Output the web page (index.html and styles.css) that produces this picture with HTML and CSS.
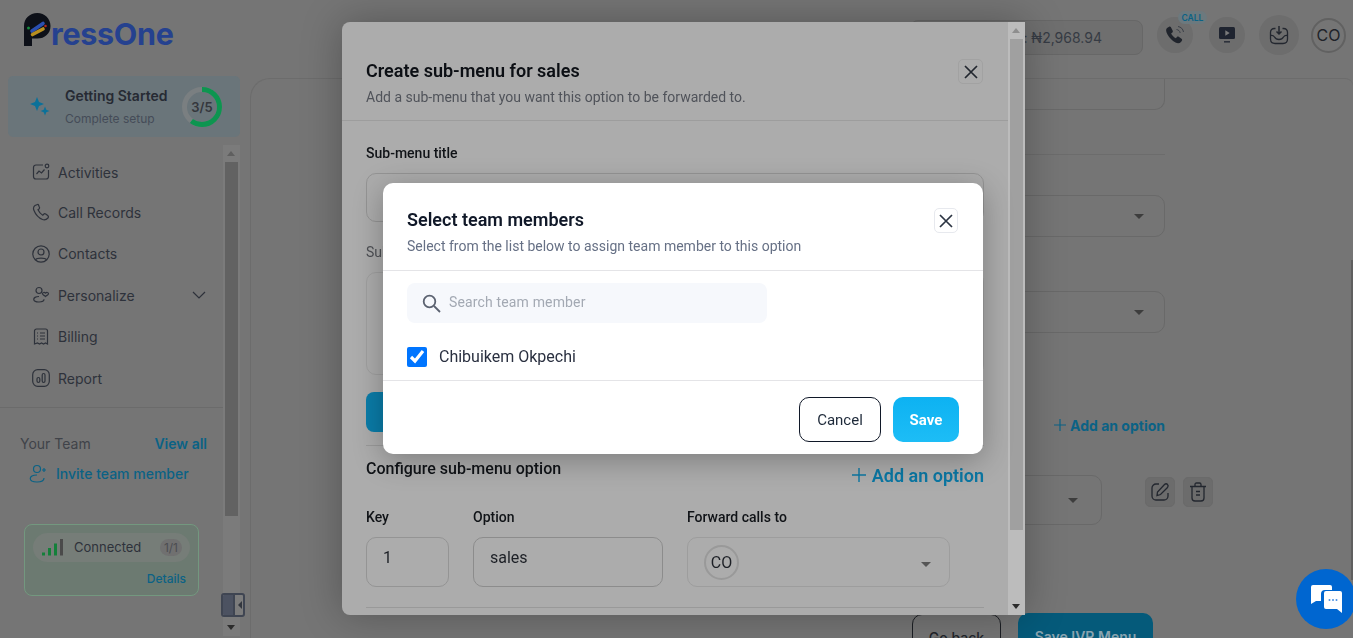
FILE: index.html
```html
<!DOCTYPE html>
<html lang="en">
<head>
<meta charset="utf-8">
<title>PressOne</title>
<link rel="stylesheet" href="styles.css">
</head>
<body>
<div class="app">
  <aside class="sidebar">
    <div class="logo">
      <svg class="logo-mark" width="27" height="33" viewBox="0 0 27 33">
        <path d="M0 33V13C0 5.500 5.700 0 13.300 0 20.800 0 26.500 5.800 26.500 13 26.500 20.500 20.800 25.600 13.300 25.600H8V33Z" fill="#0d1018"/>
        <path d="M8 18 19 10.500" stroke="#2a4fb0" stroke-width="3.600" stroke-linecap="round"/>
        <path d="M8.500 21.500 19 16" stroke="#b98f1f" stroke-width="3.600" stroke-linecap="round"/>
        <circle cx="4.500" cy="15" r="1.500" fill="#168a3c"/>
        <circle cx="21.500" cy="13" r="1.300" fill="#b3261e"/>
      </svg>
      <span class="logo-text">ressOne</span>
    </div>
    <div class="getting">
      <svg class="sparkle" width="20" height="20" viewBox="0 0 20 20" fill="#0b7199">
        <path d="M7 1 9 6 14 8 9 10 7 15 5 10 0 8 5 6Z"/>
        <path d="M15 10.500 16.300 13.700 19.500 15 16.300 16.300 15 19.500 13.700 16.300 10.500 15 13.700 13.700Z"/>
      </svg>
      <div class="getting-text">
        <div class="getting-title">Getting Started</div>
        <div class="getting-sub">Complete setup</div>
      </div>
      <div class="ring">
        <svg width="40" height="40" viewBox="0 0 40 40">
          <circle cx="20" cy="20" r="17.500" fill="none" stroke="#7a7f81" stroke-width="5"/>
          <circle cx="20" cy="20" r="17.500" fill="none" stroke="#0d9550" stroke-width="5" stroke-dasharray="66 110" transform="rotate(-90 20 20)"/>
        </svg>
        <span class="ring-label">3/5</span>
      </div>
    </div>
    <div class="side-scroll">
      <div class="side-content">
        <nav class="nav">
          <a class="nav-item"><svg class="nav-icon" viewBox="0 0 18 18" fill="none" stroke="currentColor" stroke-width="1.200"><path d="M11 2H4a2.500 2.500 0 0 0-2.500 2.500v9A2.500 2.500 0 0 0 4 16h10a2.500 2.500 0 0 0 2.500-2.500V7"/><circle cx="15" cy="3" r="1.800"/><path d="M4.500 11 7 8l2.500 2 3-3.500"/></svg>Activities</a>
          <a class="nav-item"><svg class="nav-icon" viewBox="0 0 18 18" fill="none" stroke="currentColor" stroke-width="1.200"><path d="M5.500 1.500 3 2.500C1.500 3.500 1 5 2 7.500c2 5 5 7.500 8.500 9 2 .7 4 0 5.500-1.500.7-.9.5-1.800-.3-2.500l-2-1.500c-.8-.5-1.500-.4-2.100.3l-.8.9C8.500 11 7 9 6 6.800l1-.8c.6-.6.700-1.300.3-2L6.500 2c-.2-.5-.6-.6-1-.5Z"/></svg>Call Records</a>
          <a class="nav-item"><svg class="nav-icon" viewBox="0 0 18 18" fill="none" stroke="currentColor" stroke-width="1.200"><circle cx="9" cy="9" r="8.200"/><circle cx="9" cy="7" r="3"/><path d="M3.500 14.800C5 12.500 13 12.500 14.500 14.800"/></svg>Contacts</a>
          <a class="nav-item"><svg class="nav-icon" viewBox="0 0 18 18" fill="none" stroke="currentColor" stroke-width="1.200"><circle cx="7" cy="4.500" r="3"/><path d="M7 10.500c-7 0-7 5.500 0 5.500 3 0 5-1 5-2.700"/><path d="M13.500 10.500c-1-1.300-3.200-1.300-3-3 .2-1.200 2-1.400 3-.4 1-1 2.800-.8 3 .4.200 1.700-2 1.700-3 3Z"/></svg>Personalize<svg class="chev" width="14" height="8" viewBox="0 0 14 8" fill="none" stroke="currentColor" stroke-width="1.200"><path d="M1 1l6 6 6-6"/></svg></a>
          <a class="nav-item"><svg class="nav-icon" viewBox="0 0 18 18" fill="none" stroke="currentColor" stroke-width="1.200"><path d="M2.500 16V3a2 2 0 0 1 2-2h9a2 2 0 0 1 2 2v13l-2-1-2 1-2-1-2 1-2-1Z"/><path d="M5 5h1M8 5h5M5 8h1M8 8h5M5 11h1M8 11h5"/></svg>Billing</a>
          <a class="nav-item"><svg class="nav-icon" viewBox="0 0 18 18" fill="none" stroke="currentColor" stroke-width="1.200"><rect x=".7" y=".7" width="16.600" height="16.600" rx="5"/><rect x="5" y="8.500" width="2.800" height="5" rx="1.400"/><rect x="10.200" y="4.500" width="2.800" height="9" rx="1.400"/></svg>Report</a>
        </nav>
        <div class="team">
          <div class="team-head"><span class="team-title">Your Team</span><a class="view-all">View all</a></div>
          <a class="invite"><svg width="18" height="19" viewBox="0 0 18 19" fill="none" stroke="currentColor" stroke-width="1.200"><circle cx="8" cy="5" r="3.500"/><path d="M8 11c-9 0-9 7 0 7 5 0 7-2 7-4"/><path d="M13 6h4M15 4v4"/></svg>Invite team member</a>
        </div>
        <div class="conn">
          <div class="conn-pill">
            <svg width="21" height="17" viewBox="0 0 21 17"><rect x="0" y="13.500" width="3" height="3" fill="#14803a"/><rect x="6" y="9" width="3" height="7.500" fill="#14803a"/><rect x="12" y="4.500" width="3" height="12" fill="#14803a"/><rect x="18" y="0" width="3" height="16.500" fill="#4a4a4a"/></svg>
            <span class="conn-label">Connected</span>
            <span class="conn-count">1/1</span>
          </div>
          <a class="conn-details">Details</a>
        </div>
      </div>
      <div class="sbar sbar-side">
        <span class="arrow-up dim"></span>
        <div class="thumb thumb-side"></div>
        <span class="arrow-down"></span>
      </div>
      <button class="collapse" type="button"><span class="collapse-fill"></span><span class="collapse-arrow"></span></button>
    </div>
  </aside>

  <div class="right">
    <header class="topbar">
      <div class="balance">Balance: ₦2,968.94</div>
      <div class="round phone">
        <svg width="20" height="20" viewBox="0 0 20 20"><path d="M4.500 1.500 2 3C.5 4.500 1 6.500 2.500 9.500c2 3.500 4.500 6 8 8 2 1 4 1 5.500-.5l1-1.500c.3-.7 0-1.300-.5-1.700l-2.800-2c-.6-.4-1.300-.3-1.800.2l-1 1.200c-2-1-3.700-2.700-4.800-4.800l1.300-1c.5-.5.6-1.200.2-1.800L5.800 2c-.4-.5-.8-.7-1.300-.5Z" fill="#20242c"/><path d="M11.500 4.500c2 .3 3.300 1.500 3.700 3.500M13 1.500c3 .5 5 2.500 5.500 5.500" fill="none" stroke="#3a3f48" stroke-width="1"/></svg>
        <span class="badge">CALL</span>
      </div>
      <div class="round video">
        <svg width="18" height="18" viewBox="0 0 18 18"><rect x="1" y="1" width="16" height="12" rx="1.500" fill="#1f2430"/><path d="M7.300 4.200 11.700 7 7.300 9.800Z" fill="#7a7a7a"/><rect x="6" y="15.200" width="6" height="1.300" fill="#1f2430"/></svg>
      </div>
      <div class="round inbox">
        <svg width="20" height="20" viewBox="0 0 20 20" fill="none" stroke="#23272f" stroke-width="1.300"><path d="M6.500 3.500H5.500C3 3.500 1.500 5 1.500 7.500v6.500c0 2.800 1.700 4.500 4.500 4.500h8c2.800 0 4.500-1.700 4.500-4.500V7.500c0-2.500-1.500-4-4-4h-1"/><path d="M1.500 10.500c2-.5 3 0 4 1.500 1 1.800 2.500 2.500 4.500 2.500s3.500-.7 4.500-2.500c1-1.500 2-2 4-1.500"/><path d="M10 1v7.500M7.500 6.500 10 9l2.500-2.500" stroke-width="1.500"/></svg>
      </div>
      <div class="avatar avatar-top">CO</div>
    </header>
    <main class="panel">
      <div class="form">
        <div class="field input-tail"></div>
        <div class="field rule"></div>
        <div class="field select first-select"><span class="caret"></span></div>
        <div class="field select second-select"><span class="caret"></span></div>
        <a class="field add-base"><svg width="12" height="12" viewBox="0 0 12 12" stroke="currentColor" stroke-width="1.200"><path d="M6 0v12M0 6h12"/></svg>Add an option</a>
        <div class="opt-row">
          <div class="select opt-select"><span class="caret"></span></div>
          <div class="tool">
            <svg width="20" height="20" viewBox="0 0 20 20" fill="none" stroke="#23272f" stroke-width="1.300"><path d="M9 2H6a4 4 0 0 0-4 4v8a4 4 0 0 0 4 4h8a4 4 0 0 0 4-4v-3"/><path d="M7 13.500 7.500 10l7-7.500c1-1 2.200-1 3 0 .8.800.8 2 0 3l-7 7Z"/></svg>
          </div>
          <div class="tool">
            <svg width="18" height="20" viewBox="0 0 18 20" fill="none" stroke="#23272f" stroke-width="1.300"><path d="M1 4.500h16M6 4V2.500c0-1 .5-1.500 1.500-1.500h3c1 0 1.500.5 1.500 1.500V4"/><path d="M3 5v11a3 3 0 0 0 3 3h6a3 3 0 0 0 3-3V5M7 9.500h4M7 13h4"/></svg>
          </div>
        </div>
        <div class="actions">
          <button class="btn-back" type="button">Go back</button>
          <button class="btn-save-ivr" type="button">Save IVR Menu</button>
        </div>
      </div>
      <span class="page-thumb"></span>
    </main>
  </div>
</div>

<div class="layer layer-sub">
  <section class="sub-modal">
    <div class="sub-scroll">
      <div class="sub-head">
        <div>
          <h2 class="sub-title">Create sub-menu for sales</h2>
          <p class="sub-desc">Add a sub-menu that you want this option to be forwarded to.</p>
        </div>
        <button class="close close-dim" type="button"><svg width="14" height="14" viewBox="0 0 14 14" stroke="currentColor" stroke-width="1.700"><path d="M1 1l12 12M13 1 1 13"/></svg></button>
      </div>
      <div class="sub-body">
        <label class="lab">Sub-menu title</label>
        <div class="box box-title"></div>
        <label class="lab lab-muted">Sub</label>
        <div class="box box-msg"></div>
        <div class="blue-btn"></div>
        <div class="hr hr-a"></div>
        <div class="config-head">
          <span class="config-title">Configure sub-menu option</span>
          <a class="add-sub"><svg width="14" height="14" viewBox="0 0 14 14" stroke="currentColor" stroke-width="1.400"><path d="M7 0v14M0 7h14"/></svg>Add an option</a>
        </div>
        <div class="cfg-grid">
          <span class="lab-s">Key</span><span class="lab-s">Option</span><span class="lab-s">Forward calls to</span>
          <div class="box cell">1</div>
          <div class="box cell cell-strong">sales</div>
          <div class="box cell-forward"><span class="avatar avatar-mini">CO</span><span class="caret caret-sub"></span></div>
        </div>
        <div class="hr hr-b"></div>
      </div>
    </div>
    <div class="sbar sbar-sub">
      <span class="arrow-up dim-sub"></span>
      <div class="thumb thumb-sub"></div>
      <span class="arrow-down"></span>
    </div>
  </section>
</div>

<div class="layer layer-team">
  <section class="team-modal">
    <div class="team-modal-head">
      <div>
        <h2 class="tm-title">Select team members</h2>
        <p class="tm-desc">Select from the list below to assign team member to this option</p>
      </div>
      <button class="close close-light" type="button"><svg width="14" height="14" viewBox="0 0 14 14" stroke="currentColor" stroke-width="1.700"><path d="M1 1l12 12M13 1 1 13"/></svg></button>
    </div>
    <div class="tm-body">
      <div class="search">
        <svg width="19" height="19" viewBox="0 0 19 19" fill="none" stroke="#5b6270" stroke-width="1.800"><circle cx="7.500" cy="7.500" r="5.800"/><path d="m12 12 6 6"/></svg>
        <span class="search-ph">Search team member</span>
      </div>
      <label class="member"><input class="check" type="checkbox" checked><span>Chibuikem Okpechi</span></label>
    </div>
    <div class="tm-foot">
      <button class="btn-cancel" type="button">Cancel</button>
      <button class="btn-save" type="button">Save</button>
    </div>
  </section>
</div>

<button class="chat" type="button" aria-label="Chat">
  <svg width="32" height="28" viewBox="0 0 32 28" fill="#fff"><path d="M2 0h17a2 2 0 0 1 2 2v3h-7a4 4 0 0 0-4 4v7H5l-5 3V2a2 2 0 0 1 2-2Z"/><path d="M13 8a2 2 0 0 1 2-2h14a2 2 0 0 1 2 2v20l-5-4H15a2 2 0 0 1-2-2Z"/><g fill="#4a90e2"><circle cx="18.500" cy="15" r="1"/><circle cx="22" cy="15" r="1"/><circle cx="25.500" cy="15" r="1"/></g></svg>
</button>
</body>
</html>
```

FILE: styles.css
```css
* { box-sizing: border-box; }
html, body { margin: 0; height: 638px; overflow: hidden; }
body { font-family: Inter, "Noto Sans", sans-serif; background: #757575; color: #2c3039; font-size: 14px; }
a { display: block; }
button { font-family: inherit; }
h2, p { margin: 0; }

.app { display: grid; grid-template-columns: 250px 1fr; height: 638px; }

/* Sidebar */
.sidebar { display: flex; flex-direction: column; min-width: 0; height: 638px; }
.logo { height: 76px; padding: 13px 0 0 24px; display: flex; align-items: flex-start; }
.logo-mark { flex: none; }
.logo-text { font-size: 30.500px; font-weight: 700; line-height: 38px; color: #25418f; margin-top: 2px; letter-spacing: -.3px; }
.getting { width: 232px; height: 61px; margin-left: 8px; background: #6a757a; border-radius: 5px; display: flex; align-items: center; padding: 0 18px 0 22px; }
.sparkle { flex: none; margin-top: -2px; }
.getting-text { margin-left: 15px; flex: 1; }
.getting-title { font-size: 14px; font-weight: 600; line-height: 18px; color: #262a33; }
.getting-sub { font-size: 12px; line-height: 16px; color: #454c58; margin-top: 6px; }
.ring { width: 40px; height: 40px; position: relative; display: flex; align-items: center; justify-content: center; flex: none; }
.ring svg { position: absolute; inset: 0; }
.ring-label { font-size: 13px; font-weight: 600; color: #34373d; position: relative; }

.side-scroll { position: relative; display: flex; width: 240px; height: 491px; margin-top: 8px; }
.side-content { width: 223px; flex: none; }
.nav { padding: 7px 0 9px; border-bottom: 1px solid #6b6b6b; }
.nav-item { height: 40px; display: flex; align-items: center; padding-left: 32px; font-size: 14px; color: #2e323b; }
.nav-item:nth-child(n+3) { margin-top: 1.500px; }
.nav-icon { width: 18px; height: 18px; margin-right: 8px; flex: none; }
.chev { margin-left: auto; margin-right: 17px; }

.team { padding: 26px 16px 0 20px; }
.team-head { display: flex; justify-content: space-between; align-items: center; height: 18px; }
.team-title { font-size: 14px; color: #404349; }
.view-all { font-size: 14px; font-weight: 600; color: #0b6285; }
.invite { display: flex; align-items: center; gap: 9px; margin: 11px 0 0 9px; color: #0b6285; font-size: 14px; font-weight: 500; height: 21px; }

.conn { width: 175px; height: 72px; margin: 40px 0 0 24px; border: 1px solid #73987f; border-radius: 8px; background: #6c7a71; padding: 8px; }
.conn-pill { height: 29px; background: #767d78; border-radius: 15px; display: flex; align-items: center; padding: 0 8px 0 9px; }
.conn-label { margin-left: 11px; font-size: 13px; color: #2e323b; margin-top: -1px; }
.conn-count { margin-left: auto; font-size: 12px; color: #4c4d50; background: #707070; border-radius: 10px; padding: 1px 4px; }
.conn-details { text-align: right; font-size: 12px; font-weight: 500; color: #0b6285; margin-top: 9px; padding-right: 4px; }

.sbar { width: 17px; flex: none; position: relative; display: flex; flex-direction: column; align-items: center; }
.sbar-side { background: #7b7b7b; }
.thumb { width: 13px; flex: none; }
.thumb-side { background: #626262; height: 354px; margin-top: 17px; }
.arrow-up, .arrow-down { position: absolute; left: 4px; width: 0; height: 0; border-left: 4px solid transparent; border-right: 4px solid transparent; }
.arrow-up { top: 6px; border-bottom: 5px solid #4a4a4a; }
.arrow-down { bottom: 6px; border-top: 5px solid #2c2c2c; }
.arrow-up.dim { border-bottom-color: #5f5f5f; }
.arrow-up.dim-sub { border-bottom-color: #8e8e8e; }
.collapse { position: absolute; left: 221px; top: 448px; width: 24px; height: 24px; padding: 0; border: 2px solid #3f4552; border-radius: 3px; background: #7c7c7c; display: flex; align-items: center; overflow: hidden; }
.collapse-fill { width: 10px; height: 100%; background: #4c5261; border-right: 2px solid #3f4552; box-sizing: content-box; flex: none; }
.collapse-arrow { margin-left: 3px; width: 0; height: 0; border-top: 4px solid transparent; border-bottom: 4px solid transparent; border-right: 4px solid #33373f; }

/* Right column */
.right { min-width: 0; display: flex; flex-direction: column; height: 638px; }
.topbar { height: 78px; flex: none; display: flex; align-items: center; justify-content: flex-end; padding: 0 7px 8px 0; }
.balance { width: 233px; height: 35px; border: 1px solid #676767; border-radius: 8px; background: #6f6f6f; font-size: 14px; line-height: 33px; text-align: right; padding-right: 40px; color: #363b44; margin: 5px 14px 0 0; }
.round { width: 36px; height: 36px; border-radius: 50%; background: #6d6d6d; display: flex; align-items: center; justify-content: center; flex: none; position: relative; }
.video { margin-left: 16px; }
.inbox { margin-left: 14px; width: 40px; height: 40px; }
.badge { position: absolute; left: 21px; top: -6px; width: 29px; height: 13px; border-radius: 7px; background: #6c797e; color: #0b6285; font-size: 8.500px; font-weight: 600; line-height: 14px; text-align: center; }
.avatar { display: flex; align-items: center; justify-content: center; border-radius: 50%; flex: none; }
.avatar-top { width: 35px; height: 35px; margin-left: 12px; border: 2px solid #616161; font-size: 16px; color: #202329; }

.panel { flex: 1; min-height: 0; border: 1px solid #6c6c6c; border-right: 0; border-bottom: 0; border-radius: 20px 8px 0 0; padding-right: 140px; display: flex; justify-content: flex-end; overflow: hidden; position: relative; }
.page-thumb { position: absolute; right: 0; top: 181px; width: 2px; height: 320px; background: #5f5f5f; }
.form { width: 700px; flex: none; }
.field { margin-right: 48px; }
.input-tail { height: 31px; border: 1px solid #696969; border-top: 0; border-radius: 0 0 10px 10px; }
.rule { height: 1px; background: #6c6c6c; margin-top: 44px; }
.select { border: 1px solid #696969; border-radius: 10px; position: relative; display: flex; align-items: center; justify-content: flex-end; }
.first-select { height: 42px; margin-top: 40px; padding-right: 20px; }
.second-select { height: 42px; margin-top: 54px; padding-right: 20px; }
.caret { width: 0; height: 0; border-left: 5px solid transparent; border-right: 5px solid transparent; border-top: 5px solid #3d3d3d; }
.add-base { display: flex; justify-content: flex-end; align-items: center; gap: 4px; height: 20px; margin-top: 82px; font-size: 14px; font-weight: 700; color: #0b6285; }
.opt-row { display: flex; align-items: flex-start; margin-top: 40px; }
.opt-select { width: 300px; height: 50px; margin-left: 289px; padding-right: 23px; }
.tool { width: 30px; height: 30px; border-radius: 5px; background: #6c6c6c; border: 1px solid #6a6a6a; display: flex; align-items: center; justify-content: center; margin-top: 2px; }
.opt-select + .tool { margin-left: 43px; }
.tool + .tool { margin-left: 8px; }
.actions { display: flex; justify-content: flex-end; align-items: flex-start; gap: 17px; margin: 88px 60px 0 0; }
.btn-back { width: 89px; height: 46px; margin-top: 1px; border: 1px solid #1c1f24; border-radius: 10px; background: transparent; color: #22252b; font-size: 14px; font-weight: 500; }
.btn-save-ivr { width: 135px; height: 46px; border: 0; border-radius: 10px; background: #055a7a; color: #8aa4b0; font-size: 14px; font-weight: 600; }

/* Modals */
.layer { position: fixed; inset: 0; pointer-events: none; font-family: Roboto, "Noto Sans", sans-serif; }
.layer-sub { padding: 22px 0 0 342px; }
.sub-modal { width: 683px; height: 593px; border-radius: 8px 0 0 8px; background: #acacac; display: flex; overflow: hidden; box-shadow: 0 0 40px rgba(0, 0, 0, .28); }
.sub-scroll { width: 666px; flex: none; }
.sub-head { height: 99px; padding: 37px 25px 0 24px; display: flex; justify-content: space-between; border-bottom: 1px solid #9d9d9d; }
.sub-title { font-size: 18px; font-weight: 600; line-height: 24px; color: #0c0f14; }
.sub-desc { font-size: 14px; line-height: 20px; margin-top: 4px; color: #50535a; }
.close { width: 25px; height: 25px; padding: 0; border-radius: 5px; display: flex; align-items: center; justify-content: center; flex: none; }
.close-dim { background: #acacac; border: 1px solid #a2a2a2; color: #22272f; }
.close-light { width: 24px; background: #fff; border: 1px solid #e7e9ee; color: #2b3442; }

.sub-body { padding: 23px 24px 0; }
.lab { display: block; font-size: 14px; font-weight: 500; line-height: 18px; color: #101317; }
.lab-muted { margin-top: 21px; color: #4d4f54; font-weight: 400; }
.box { border: 1px solid #949494; border-radius: 10px; }
.box-title { height: 49px; margin-top: 11px; }
.box-msg { height: 103px; margin-top: 11px; border-color: #9f9f9f; }
.blue-btn { width: 120px; height: 40px; margin-top: 17px; border-radius: 8px; background: #0a7ca8; }
.hr { height: 1px; background: #999; }
.hr-a { margin-top: 13px; }
.hr-b { margin-top: 20px; }
.config-head { display: flex; justify-content: space-between; height: 56px; }
.config-title { font-size: 16px; font-weight: 500; color: #101317; line-height: 20px; margin-top: 13px; }
.add-sub { display: flex; align-items: center; gap: 6px; height: 20px; margin-top: 19px; font-size: 18px; font-weight: 600; color: #0b77a3; }
.cfg-grid { display: grid; grid-template-columns: 83px 190px 263px; column-gap: 24px; row-gap: 12px; margin-top: 7px; }
.lab-s { font-size: 14px; font-weight: 500; line-height: 16px; color: #101317; }
.cell { height: 50px; font-size: 16px; color: #1d2026; padding: 10px 16px; line-height: 20px; }
.cell-strong { border-color: #8c8c8c; }
.cell-forward { height: 50px; border-color: #9d9d9d; display: flex; align-items: center; padding: 0 18px 0 16px; justify-content: space-between; }
.avatar-mini { width: 35px; height: 35px; border: 2px solid #999; font-size: 16px; color: #1d2026; }
.caret-sub { margin-top: 4px; border-top-color: #555; }

.sbar-sub { background: #bcbcbc; height: 593px; }
.thumb-sub { background: #a0a0a0; height: 491px; margin-top: 17px; }

.layer-team { padding: 183px 0 0 383px; }
.team-modal { width: 600px; height: 271px; background: #fff; border-radius: 10px; box-shadow: 0 6px 30px rgba(0, 0, 0, .28); pointer-events: auto; }
.team-modal-head { height: 88px; padding: 25px 25px 0 24px; display: flex; justify-content: space-between; border-bottom: 1px solid #e4e4e7; }
.tm-title { font-size: 18px; font-weight: 600; line-height: 24px; color: #101828; }
.tm-desc { font-size: 14px; line-height: 20px; margin-top: 4px; color: #667085; }
.tm-body { height: 110px; padding: 12px 24px 0; border-bottom: 1px solid #e4e4e7; }
.search { width: 360px; height: 40px; border-radius: 8px; background: #f6f8fc; display: flex; align-items: center; padding-left: 15px; gap: 8px; }
.search-ph { font-size: 14px; color: #a3a9b3; letter-spacing: .15px; margin-top: -2px; }
.member { display: flex; align-items: center; gap: 12px; margin-top: 24px; font-size: 16px; color: #2a3040; line-height: 20px; }
.check { width: 20px; height: 20px; margin: 0; flex: none; accent-color: #0075ff; }
.tm-foot { display: flex; justify-content: flex-end; gap: 12px; padding: 16px 24px 0; }
.btn-cancel { width: 82px; height: 45px; border: 1px solid #101828; border-radius: 10px; background: #fff; color: #1d2939; font-size: 15px; font-weight: 400; }
.btn-save { width: 66px; height: 45px; border: 0; border-radius: 10px; background: linear-gradient(180deg, #0db2f2, #1dbdf6); color: #fff; font-size: 15px; font-weight: 700; }

.chat { position: fixed; left: 1296px; top: 569px; width: 60px; height: 60px; border: 0; border-radius: 50%; background: #0066d0; display: flex; align-items: center; justify-content: center; padding: 0 0 0 1px; }
```
